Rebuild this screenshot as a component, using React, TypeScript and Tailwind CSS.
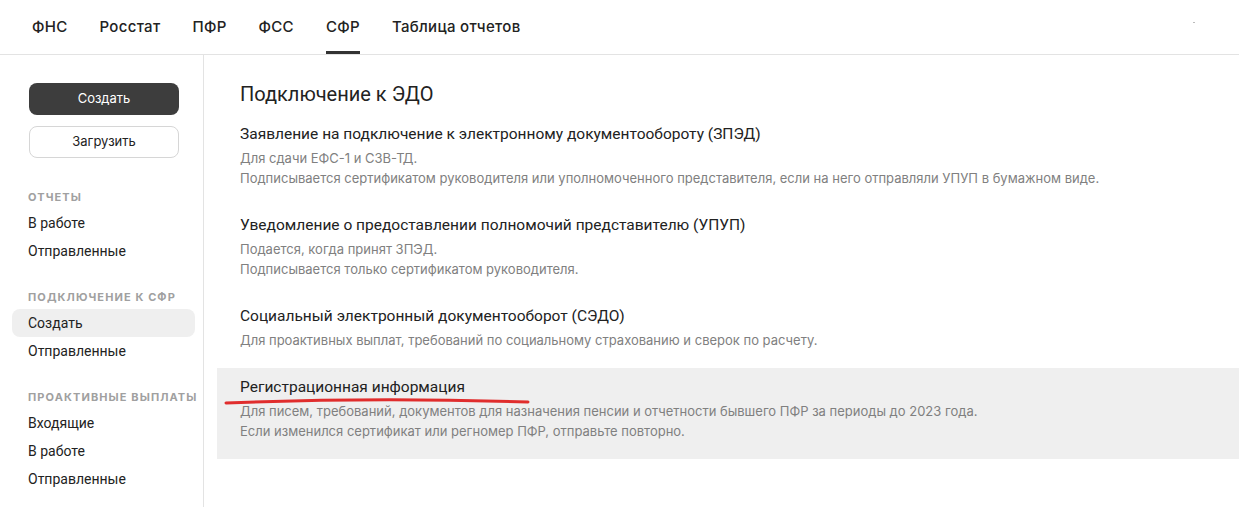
const tabs = ["ФНС", "Росстат", "ПФР", "ФСС", "СФР", "Таблица отчетов"];

type Group = { title: string; items: string[] };

const groups: Group[] = [
  { title: "Отчеты", items: ["В работе", "Отправленные"] },
  { title: "Подключение к СФР", items: ["Создать", "Отправленные"] },
  { title: "Проактивные выплаты", items: ["Входящие", "В работе", "Отправленные"] },
];

const docs = [
  {
    title: "Заявление на подключение к электронному документообороту (ЗПЭД)",
    lines: [
      "Для сдачи ЕФС-1 и СЗВ-ТД.",
      "Подписывается сертификатом руководителя или уполномоченного представителя, если на него отправляли УПУП в бумажном виде.",
    ],
  },
  {
    title: "Уведомление о предоставлении полномочий представителю (УПУП)",
    lines: ["Подается, когда принят ЗПЭД.", "Подписывается только сертификатом руководителя."],
  },
  {
    title: "Социальный электронный документооборот (СЭДО)",
    lines: ["Для проактивных выплат, требований по социальному страхованию и сверок по расчету."],
  },
  {
    title: "Регистрационная информация",
    lines: [
      "Для писем, требований, документов для назначения пенсии и отчетности бывшего ПФР за периоды до 2023 года.",
      "Если изменился сертификат или регномер ПФР, отправьте повторно.",
    ],
  },
];

const App = () => {
  return (
    <div className="flex h-[507px] w-[1239px] flex-col overflow-hidden bg-white font-['Roboto',sans-serif] text-[#222]">
      {/* верхние вкладки */}
      <header className="relative flex h-[55px] shrink-0 items-stretch gap-8 border-b border-[#e3e3e3] pl-8 font-['Inter',sans-serif]">
        {tabs.map((tab) => (
          <div
            key={tab}
            className={
              tab === "СФР"
                ? "flex items-center border-b-[3px] border-[#333] pt-[3px] text-[15px] font-medium tracking-[0.02em]"
                : "flex items-center text-[15px] font-medium tracking-[0.02em]"
            }
          >
            {tab}
          </div>
        ))}
        <span className="absolute left-[1193px] top-[22px] h-px w-[2px] bg-[#bbb]" />
      </header>

      <div className="flex min-h-0 flex-1">
        {/* меню слева */}
        <aside className="flex w-[204px] shrink-0 flex-col border-r border-[#e3e3e3] pl-3 pr-2">
          <div className="flex flex-col gap-[11px] px-[17px] pt-7 font-['Inter',sans-serif]">
            <button className="h-[32px] w-[150px] rounded-lg bg-[#3d3d3d] text-[13px] text-white">Создать</button>
            <button className="h-[32px] w-[150px] rounded-lg border border-[#d6d6d6] bg-white text-[13px]">
              Загрузить
            </button>
          </div>
          <nav className="mt-[29px] flex flex-col">
            {groups.map((g, gi) => (
              <div key={g.title} className={gi > 0 ? "mt-[22px] flex flex-col" : "flex flex-col"}>
                <div className="px-4 font-['Inter',sans-serif] text-[11px] font-bold uppercase leading-5 tracking-[0.1em] whitespace-nowrap text-[#a0a0a0]">
                  {g.title}
                </div>
                <ul className="mt-[2px] flex flex-col">
                  {g.items.map((item) => {
                    const active = g.title === "Подключение к СФР" && item === "Создать";
                    return (
                      <li
                        key={item}
                        className={
                          active
                            ? "flex h-7 items-center rounded-lg bg-[#efefef] px-4 text-[14px]"
                            : "flex h-7 items-center px-4 text-[14px]"
                        }
                      >
                        {item}
                      </li>
                    );
                  })}
                </ul>
              </div>
            ))}
          </nav>
        </aside>

        {/* основная часть */}
        <main className="flex flex-1 flex-col pl-[13px] pt-[25px]">
          <h1 className="px-[23px] text-[20px] leading-7">Подключение к ЭДО</h1>
          <div className="mt-[7px] flex flex-col">
            {docs.map((doc, i) => (
              <section
                key={doc.title}
                className={
                  i === docs.length - 1
                    ? "relative bg-[#efefef] px-[23px] pb-[18px] pt-2"
                    : "relative px-[23px] pb-[18px] pt-2"
                }
              >
                <h2 className="text-[15.5px] leading-[22px]">{doc.title}</h2>
                <div className="mt-[3px] flex flex-col font-['Inter',sans-serif]">
                  {doc.lines.map((line) => (
                    <p key={line} className="text-[13px] leading-5 text-[#808080]">
                      {line}
                    </p>
                  ))}
                </div>
                {i === docs.length - 1 && (
                  <svg
                    className="absolute left-[7px] top-[28px]"
                    width="306"
                    height="10"
                    viewBox="0 0 306 10"
                    fill="none"
                  >
                    <path
                      d="M2 7 Q 150 1 304 6"
                      stroke="#e02d2d"
                      strokeWidth="3"
                      strokeLinecap="round"
                    />
                  </svg>
                )}
              </section>
            ))}
          </div>
        </main>
      </div>
    </div>
  );
};

export default App;
